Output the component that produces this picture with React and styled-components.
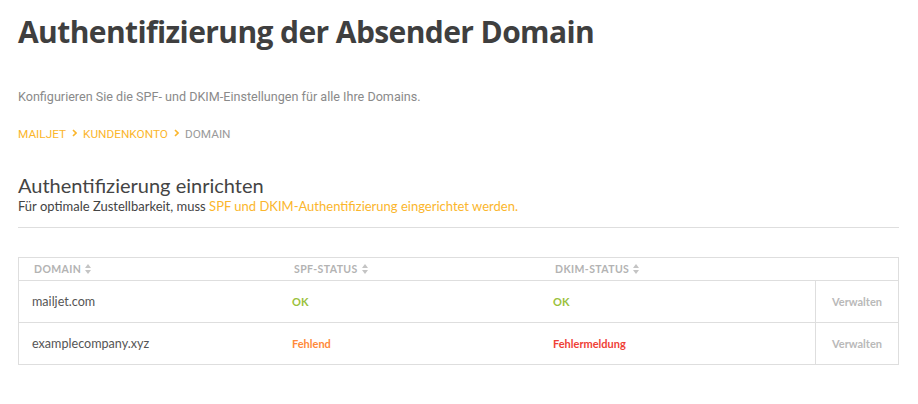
import React from 'react';
import styled, { createGlobalStyle } from 'styled-components';

const GlobalStyle = createGlobalStyle`
  html, body { margin: 0; padding: 0; background: #fff; }
  body { font-family: Lato, sans-serif; }
`;

const Page = styled.div`
  width: 918px;
  height: 404px;
  padding: 0 19px 0 18px;
  box-sizing: border-box;
  overflow: hidden;
`;

const Title = styled.h1`
  margin: 0;
  padding-top: 10px;
  font-family: "Open Sans", sans-serif;
  font-weight: 700;
  font-size: 30px;
  line-height: 44px;
  color: #3f3f3f;
  letter-spacing: -0.6px;
`;

const Lead = styled.p`
  margin: 34px 0 0;
  font-family: Roboto, sans-serif;
  font-size: 12.6px;
  line-height: 18px;
  color: #8a8a8a;
`;

const Crumbs = styled.nav`
  display: flex;
  align-items: center;
  gap: 6px;
  margin-top: 19px;
  font-family: Roboto, sans-serif;
  font-size: 11.8px;
  line-height: 18px;
  text-transform: uppercase;
`;

const Crumb = styled.span`
  color: ${p => (p.$current ? '#9a9a9a' : '#fbb62c')};
`;

const Chevron = () => (
  <svg width="5" height="8" viewBox="0 0 5 8" style={{ marginTop: -2 }}>
    <path d="M1 1 L4 4 L1 7" fill="none" stroke="#fbb62c" strokeWidth="1.6" />
  </svg>
);

const SectionTitle = styled.h2`
  margin: 30px 0 0;
  font-family: Lato, sans-serif;
  font-weight: 400;
  font-size: 20px;
  line-height: 24px;
  color: #444;
`;

const Hint = styled.p`
  margin: 0;
  font-family: Lato, sans-serif;
  font-size: 13px;
  line-height: 18px;
  color: #444;
`;

const Accent = styled.span`
  color: #fbb62c;
`;

const Rule = styled.hr`
  margin: 12px 0 29px;
  border: 0;
  border-top: 1px solid #dedede;
`;

const Table = styled.div`
  border: 1px solid #dedede;
  display: grid;
  grid-template-columns: 260px 261px 275px 1fr;
  font-family: Lato, sans-serif;
`;

const HeadCell = styled.div`
  height: 22px;
  display: flex;
  align-items: center;
  gap: 4px;
  padding-left: 15px;
  font-size: 10.5px;
  font-weight: 700;
  letter-spacing: 0.4px;
  color: #b3b3b3;
  text-transform: uppercase;
  border-bottom: 1px solid #dedede;
`;

const Cell = styled.div`
  height: 41px;
  display: flex;
  align-items: center;
  justify-content: ${p => (p.$center ? 'center' : 'flex-start')};
  padding-left: ${p => (p.$center ? '0' : '13px')};
  border-bottom: ${p => (p.$last ? '0' : '1px solid #dedede')};
  border-left: ${p => (p.$action ? '1px solid #dedede' : '0')};
  font-size: 12.6px;
  color: #555;
`;

const Status = styled.span`
  font-size: 11px;
  font-weight: 700;
  color: ${p => p.$color};
`;

const Action = styled.span`
  font-size: 11px;
  font-weight: 700;
  color: #b9b9b9;
`;

const SortIcon = () => (
  <svg width="6" height="10" viewBox="0 0 6 10">
    <path d="M3 0 L6 4 L0 4 Z" fill="#c4c4c4" />
    <path d="M3 10 L6 6 L0 6 Z" fill="#c4c4c4" />
  </svg>
);

const rows = [
  { domain: 'mailjet.com', spf: ['OK', '#9ac13c'], dkim: ['OK', '#9ac13c'] },
  { domain: 'examplecompany.xyz', spf: ['Fehlend', '#ff8a3a'], dkim: ['Fehlermeldung', '#ef4136'] },
];

export default function App() {
  return (
    <Page>
      <GlobalStyle />
      <Title>Authentifizierung der Absender Domain</Title>
      <Lead>Konfigurieren Sie die SPF- und DKIM-Einstellungen für alle Ihre Domains.</Lead>
      <Crumbs>
        <Crumb>Mailjet</Crumb>
        <Chevron />
        <Crumb>Kundenkonto</Crumb>
        <Chevron />
        <Crumb $current>Domain</Crumb>
      </Crumbs>
      <SectionTitle>Authentifizierung einrichten</SectionTitle>
      <Hint>
        Für optimale Zustellbarkeit, muss <Accent>SPF und DKIM-Authentifizierung eingerichtet werden.</Accent>
      </Hint>
      <Rule />
      <Table>
        <HeadCell>Domain <SortIcon /></HeadCell>
        <HeadCell>SPF-Status <SortIcon /></HeadCell>
        <HeadCell>DKIM-Status <SortIcon /></HeadCell>
        <HeadCell />
        {rows.map((r, i) => {
          const last = i === rows.length - 1;
          return (
            <React.Fragment key={r.domain}>
              <Cell $last={last}>{r.domain}</Cell>
              <Cell $last={last}><Status $color={r.spf[1]}>{r.spf[0]}</Status></Cell>
              <Cell $last={last}><Status $color={r.dkim[1]}>{r.dkim[0]}</Status></Cell>
              <Cell $last={last} $action $center><Action>Verwalten</Action></Cell>
            </React.Fragment>
          );
        })}
      </Table>
    </Page>
  );
}
